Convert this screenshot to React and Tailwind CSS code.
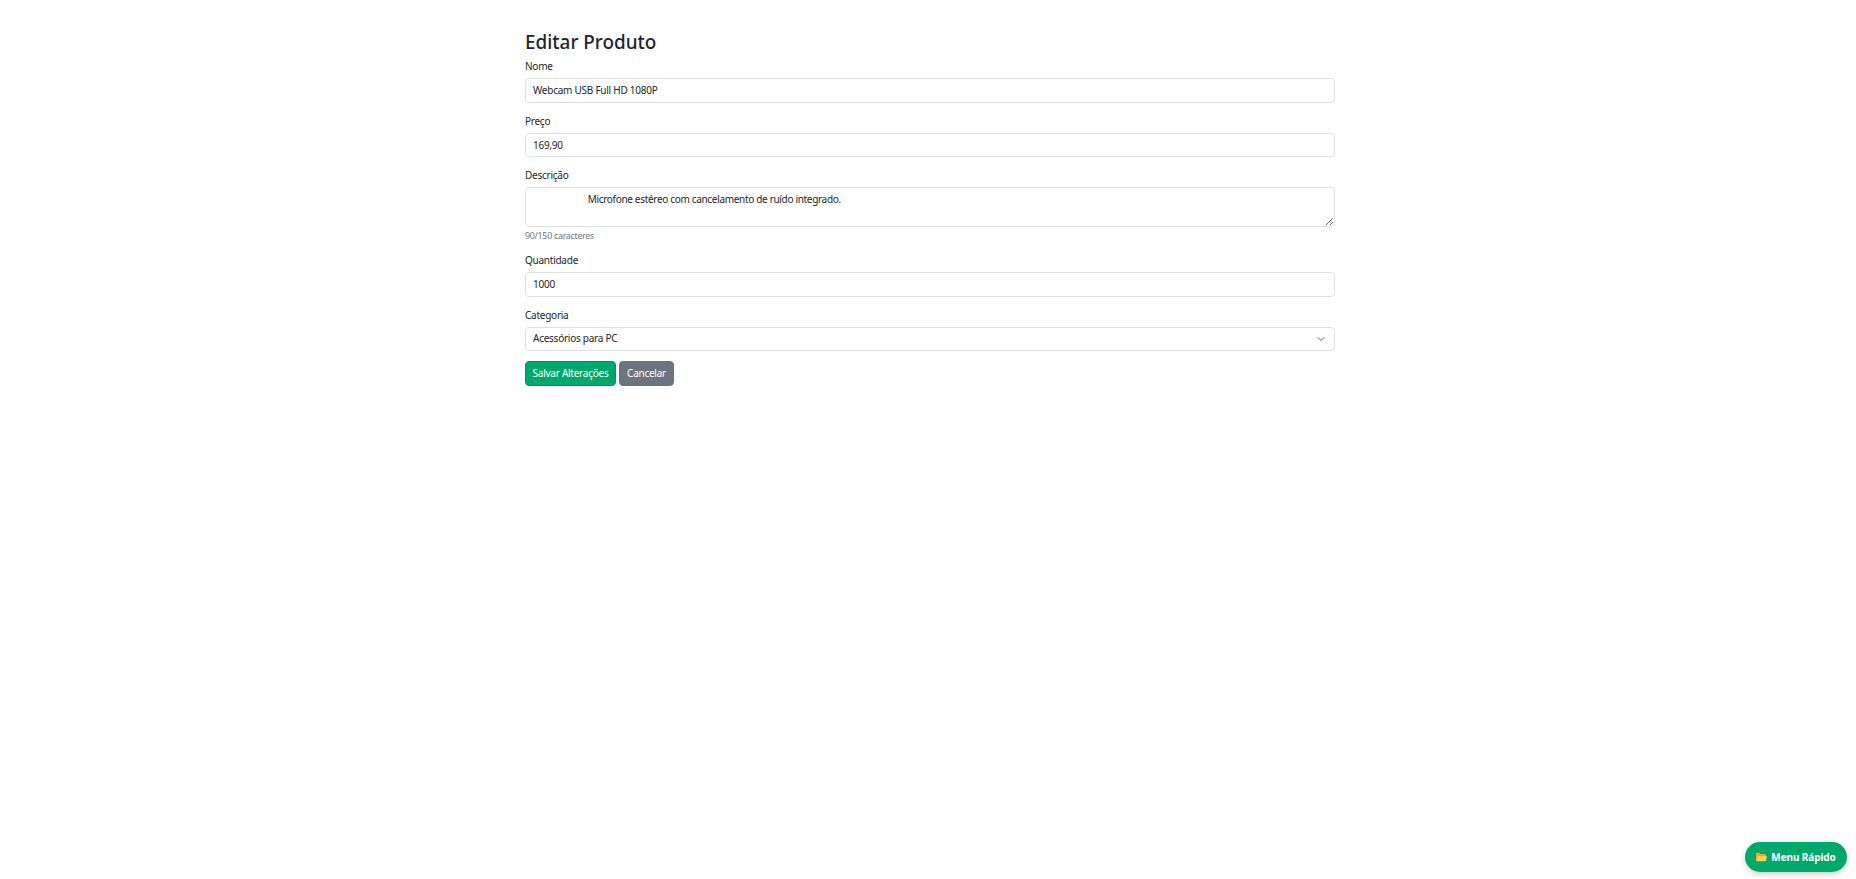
export default function App() {
  const label = "block text-[10px] tracking-[-0.25px] leading-[16px] text-[#212529] mb-[4px]";
  const input = "block w-full h-[24.6px] px-[7px] border border-[#dee2e6] rounded-[4px] bg-white text-[10px] tracking-[-0.25px] text-[#212529] outline-none";
  return (
    <div className="relative min-h-[879px] bg-white font-['Noto_Sans',sans-serif]">
      <div className="w-[810px] ml-[525px] pt-[27px]">
        <h2 className="text-[18.9px] leading-[30px] font-medium text-[#212529]">Editar Produto</h2>
        <form className="flex flex-col">
          <div className="mb-[10px] mt-[1px]">
            <label className={label}>Nome</label>
            <input className={input} defaultValue="Webcam USB Full HD 1080P" />
          </div>
          <div className="mb-[10px]">
            <label className={label}>Preço</label>
            <input className={input} defaultValue="169,90" />
          </div>
          <div className="mb-[10px]">
            <label className={label}>Descrição</label>
            <textarea className="block w-full h-[40px] px-[7px] py-[3px] border border-[#dee2e6] rounded-[4px] bg-white text-[10px] tracking-[-0.32px] leading-[17px] text-[#212529] outline-none" defaultValue="                        Microfone estéreo com cancelamento de ruído integrado." />
            <div className="mt-[2.8px] text-[8.8px] tracking-[-0.25px] leading-[12px] text-[#6c757d]">90/150 caracteres</div>
          </div>
          <div className="mb-[10px]">
            <label className={label}>Quantidade</label>
            <input className={input} defaultValue="1000" />
          </div>
          <div className="mb-[9.6px]">
            <label className={label}>Categoria</label>
            <div className="relative">
              <select className={input + " appearance-none"} defaultValue="a">
                <option value="a">Acessórios para PC</option>
              </select>
              <svg className="absolute right-[10px] top-[9px] w-[8px] h-[6px]" viewBox="0 0 16 12" fill="none" stroke="#5f6368" strokeWidth="2" strokeLinecap="round" strokeLinejoin="round">
                <path d="M2 3l6 6 6-6" />
              </svg>
            </div>
          </div>
          <div className="flex gap-[3px]">
            <button type="button" className="h-[25px] w-[91px] rounded-[4px] border border-[#0d6efd] bg-[#00a86b] text-white text-[10px] tracking-[-0.25px]">Salvar Alterações</button>
            <button type="button" className="h-[25px] w-[55px] rounded-[4px] border border-[#6c757d] bg-[#6c757d] text-white text-[10px] tracking-[-0.25px]">Cancelar</button>
          </div>
        </form>
      </div>
      <button type="button" className="absolute right-[9px] bottom-[7px] h-[30px] w-[102px] rounded-full bg-[#00a86b] shadow-[0_2px_6px_rgba(0,0,0,0.2)] text-white text-[10px] tracking-[-0.1px] font-bold flex items-center justify-center gap-[4px]">
        <svg width="11" height="10" viewBox="0 0 11 10">
          <path d="M0 1.5C0 1 .4.8.8.8h2.6l1 1.2h4.8c.4 0 .7.3.7.7V9H.8C.4 9 0 8.7 0 8.3z" fill="#f0a92c" />
          <path d="M1.5 4h9c.3 0 .5.2.4.5L9.8 9.2H.5z" fill="#ffd24d" />
        </svg>
        Menu Rápido
      </button>
    </div>
  );
}
